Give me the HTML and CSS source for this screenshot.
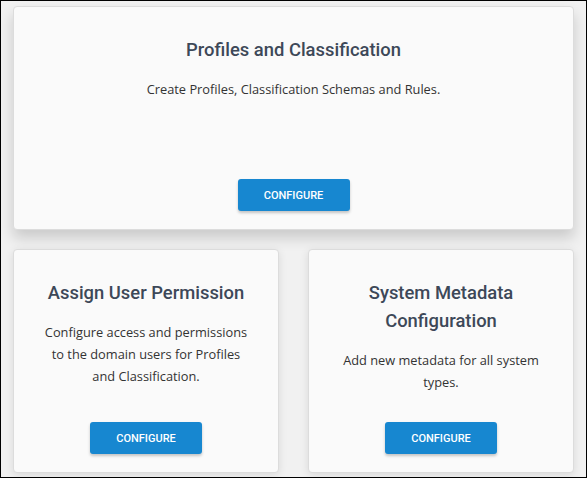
FILE: index.html
```html
<!DOCTYPE html>
<html>
<head>
<meta charset="utf-8" />
<title>Configuration</title>
<link rel="stylesheet" href="styles.css">
</head>
<body>
<div class="frame">
  <div class="card card-top">
    <h2 class="card-title">Profiles and Classification</h2>
    <p class="card-desc">Create Profiles, Classification Schemas and Rules.</p>
    <input type="button" class="btn-config" value="CONFIGURE" />
  </div>
  <div class="card-row">
    <div class="card">
      <h2 class="card-title">Assign User Permission</h2>
      <p class="card-desc">Configure access and permissions to the domain users for Profiles and Classification.</p>
      <input type="button" class="btn-config" value="CONFIGURE" />
    </div>
    <div class="card">
      <h2 class="card-title">System Metadata Configuration</h2>
      <p class="card-desc">Add new metadata for all system types.</p>
      <input type="button" class="btn-config" value="CONFIGURE" />
    </div>
  </div>
</div>
</body>
</html>
```

FILE: styles.css
```css
*{margin:0px; padding:0px; box-sizing:border-box;}
body{background:#fff;}
.frame{
	width:587px;
	height:478px;
	border:1px solid #000;
	background-color:#f1f1f1;
	padding:5px 12px 0 12px;
	overflow:hidden;
}
.card{
	display:flex;
	flex-direction:column;
	align-items:center;
	text-align:center;
	height:224px;
	padding:29px 30px 18px 30px;
	background-color:#fafafa;
	border:1px solid #dcdcdc;
	border-radius:4px;
	box-shadow:0 2px 8px rgba(0,0,0,0.10);
}
.card-top{
	box-shadow:0 8px 14px rgba(0,0,0,0.16);
}
.card-title{
	font-family:Roboto, "Liberation Sans", sans-serif;
	font-weight:500;
	font-size:18.4px;
	line-height:28px;
	color:#3d4858;
}
.card-desc{
	margin-top:14px;
	font-family:"Open Sans", "Noto Sans", sans-serif;
	font-size:12.8px;
	line-height:22px;
	color:#333;
}
.card-row{
	display:grid;
	grid-template-columns:1fr 1fr;
	column-gap:29px;
	margin-top:19px;
}
.card-row .card{
	padding-left:26px;
	padding-right:26px;
}
.btn-config{
	display:block;
	margin-top:auto;
	width:112px;
	height:32px;
	background-color:#1787d0;
	color:#fff;
	font-family:Roboto, "Liberation Sans", sans-serif;
	font-weight:500;
	font-size:11px;
	border:none;
	border-radius:3px;
	box-shadow:0 2px 3px rgba(0,0,0,0.22);
	cursor:pointer;
}
```
